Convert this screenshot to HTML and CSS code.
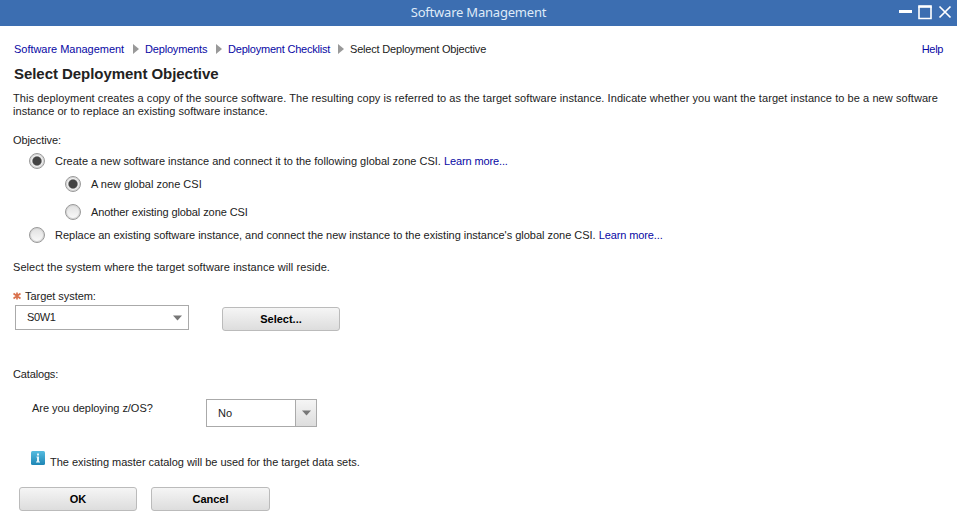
FILE: index.html
```html
<!DOCTYPE html>
<html lang="en">
<head>
<meta charset="utf-8">
<title>Software Management</title>
<link rel="stylesheet" href="styles.css">
</head>
<body>
<header class="titlebar">
  <span class="window-title">Software Management</span>
  <svg class="window-controls" width="54" height="16" viewBox="0 0 54 16">
    <path d="M1 7.5h13" stroke="#fff" stroke-width="3"/>
    <path d="M21 2.5v12h12v-12" fill="none" stroke="#fff" stroke-width="1.6"/>
    <path d="M20.2 2.5h13.6" stroke="#fff" stroke-width="2.6"/>
    <path d="M41.5 2.5l11 11m0-11l-11 11" stroke="#fff" stroke-width="1.7"/>
  </svg>
</header>
<main class="content">
  <nav class="breadcrumb">
    <a class="crumb-1" href="#">Software Management</a>
    <svg class="sep" width="6" height="10"><path d="M0 0v10l6-5z"/></svg>
    <a class="crumb-2" href="#">Deployments</a>
    <svg class="sep" width="6" height="10"><path d="M0 0v10l6-5z"/></svg>
    <a class="crumb-3" href="#">Deployment Checklist</a>
    <svg class="sep" width="6" height="10"><path d="M0 0v10l6-5z"/></svg>
    <span class="crumb-4">Select Deployment Objective</span>
    <a class="help" href="#">Help</a>
  </nav>
  <h1>Select Deployment Objective</h1>
  <p class="intro"><span class="intro-1">This deployment creates a copy of the source software. The resulting copy is referred to as the target software instance. Indicate whether you want the target instance to be a new software</span><br><span class="intro-2">instance or to replace an existing software instance.</span></p>
  <p class="objective">Objective:</p>
  <div class="option row-create"><i class="radio on"></i><span class="t-create">Create a new software instance and connect it to the following global zone CSI. <a href="#">Learn more...</a></span></div>
  <div class="option nested row-new"><i class="radio on"></i><span class="t-new">A new global zone CSI</span></div>
  <div class="option nested row-another"><i class="radio"></i><span class="t-another">Another existing global zone CSI</span></div>
  <div class="option row-replace"><i class="radio"></i><span class="t-replace">Replace an existing software instance, and connect the new instance to the existing instance's global zone CSI. <a href="#">Learn more...</a></span></div>
  <p class="system-note"><span class="t-note">Select the system where the target software instance will reside.</span></p>
  <div class="label-row">
    <svg width="8" height="8" viewBox="0 0 8 8"><path d="M4 .5v7M.5 1.5l7 5M7.5 1.5l-7 5" stroke="#d9714d" stroke-width="1.7"/></svg>
    <span class="t-target">Target system:</span>
  </div>
  <div class="system-row">
    <div class="select system"><span>S0W1</span><svg width="9" height="6"><path d="M0 .5h9L4.5 5.5z"/></svg></div>
    <div class="button select-button">Select...</div>
  </div>
  <p class="catalogs">Catalogs:</p>
  <div class="zos-row">
    <span class="t-zos">Are you deploying z/OS?</span>
    <div class="select zos"><span>No</span><div class="arrow"><svg width="9" height="6"><path d="M0 .5h9L4.5 5.5z"/></svg></div></div>
  </div>
  <div class="info">
    <svg width="14" height="14" viewBox="0 0 14 14">
      <defs><linearGradient id="blue" x2="0" y2="1"><stop stop-color="#55bce0"/><stop offset="1" stop-color="#1e86b5"/></linearGradient></defs>
      <rect width="14" height="14" rx="1.5" fill="url(#blue)"/>
      <path d="M6 2.5h2v2H6zM5.5 5.5H8v5h1v1H5v-1h1v-4h-.5z" fill="#e6f6fc"/>
    </svg>
    <span class="t-info">The existing master catalog will be used for the target data sets.</span>
  </div>
  <div class="actions"><div class="button ok">OK</div><div class="button">Cancel</div></div>
</main>
</body>
</html>
```
FILE: styles.css
```css
* { box-sizing: border-box; }
html, body { margin: 0; height: 511px; overflow: hidden; background: #fff; }
body { font: 11px/13px "Liberation Sans", Arial, sans-serif; color: #222; }
a { color: #0808a4; text-decoration: none; white-space: nowrap; }
p, h1 { margin: 0; white-space: nowrap; }
span { white-space: nowrap; }
svg { display: block; flex: none; }

.titlebar { height: 26px; background: #3c6eb1; display: grid; grid-template-columns: 1fr auto 1fr; align-items: center; }
.window-title { grid-column: 2; font: 13px/20px "Noto Sans", sans-serif; letter-spacing: -0.21px; color: #dfeaf8; padding-bottom: 3px; }
.window-controls { justify-self: end; margin: 0 5px 2px 0; }

.content { padding: 17px 14px 0 13px; }
.breadcrumb { display: flex; align-items: center; height: 13px; padding-left: 1px; }
.breadcrumb > :not(svg) { flex: none; }
.crumb-1 { width: 110px; letter-spacing: -0.03px; }
.crumb-2 { width: 62px; letter-spacing: -0.18px; }
.crumb-3 { width: 101px; letter-spacing: -0.21px; }
.crumb-4 { letter-spacing: -0.19px; }
.sep { fill: #999; margin: 0 6px 2px 9px; }
.help { margin-left: auto; letter-spacing: -0.35px; }
h1 { margin: 9px 0 0 1px; font-size: 15px; line-height: 18px; letter-spacing: -0.05px; }
.intro { margin-top: 9px; }
.intro-1 { letter-spacing: 0.069px; }
.intro-2 { letter-spacing: 0.045px; }
.objective { margin-top: 16px; letter-spacing: -0.1px; }

.option { display: flex; align-items: center; gap: 10px; height: 16px; padding-left: 16px; }
.nested { padding-left: 52px; }
.row-create { margin-top: 6px; }
.row-new { margin-top: 7px; }
.row-another { margin-top: 12px; }
.row-replace { margin-top: 7px; }
.t-create a { letter-spacing: -0.12px; }
.t-another { letter-spacing: -0.09px; }
.t-replace { letter-spacing: -0.018px; }
.t-replace a { letter-spacing: -0.12px; }
.radio { width: 16px; height: 16px; border: 1px solid #999; border-radius: 50%; background: linear-gradient(#e0e0e0, #fafafa); box-shadow: inset 0 0 0 1px #d4d4d4; }
.radio.on { background: radial-gradient(circle at 50% 50%, #444 0 4px, #f2f2f2 5.2px); }

.system-note { margin-top: 18px; letter-spacing: 0.07px; }
.label-row { display: flex; align-items: center; gap: 4px; height: 13px; margin-top: 16px; }
.label-row svg { margin-bottom: 1px; }
.t-target { letter-spacing: -0.05px; }
.system-row { display: flex; margin-top: 2px; padding-left: 2px; height: 27px; }
.select { display: flex; align-items: center; justify-content: space-between; border: 1px solid #aaa; background: #fff; padding-left: 11px; }
.select svg { fill: #777; }
.system { width: 174px; height: 25px; padding-right: 6px; }
.system span { letter-spacing: -0.4px; }
.button { width: 118px; height: 24px; border: 1px solid #bbb; border-radius: 3px; background: linear-gradient(#f5f5f5, #ddd); text-align: center; font-weight: bold; line-height: 23px; color: #000; }
.select-button { margin: 2px 0 0 33px; }
.catalogs { margin-top: 36px; letter-spacing: -0.15px; }
.zos-row { display: flex; height: 28px; margin-top: 18px; padding: 0 0 0 19px; }
.t-zos { width: 174px; padding-top: 3px; letter-spacing: -0.04px; }
.zos { width: 111px; height: 28px; }
.arrow { width: 21px; height: 26px; border-left: 1px solid #aaa; background: linear-gradient(#f5f5f5, #ddd); display: flex; align-items: center; justify-content: center; }
.info { display: flex; gap: 5px; margin: 24px 0 0 18px; height: 18px; }
.info span { padding-top: 5px; letter-spacing: -0.022px; }
.actions { display: flex; gap: 14px; margin: 18px 0 0 6px; }
.actions .button:last-child { width: 119px; }
```
